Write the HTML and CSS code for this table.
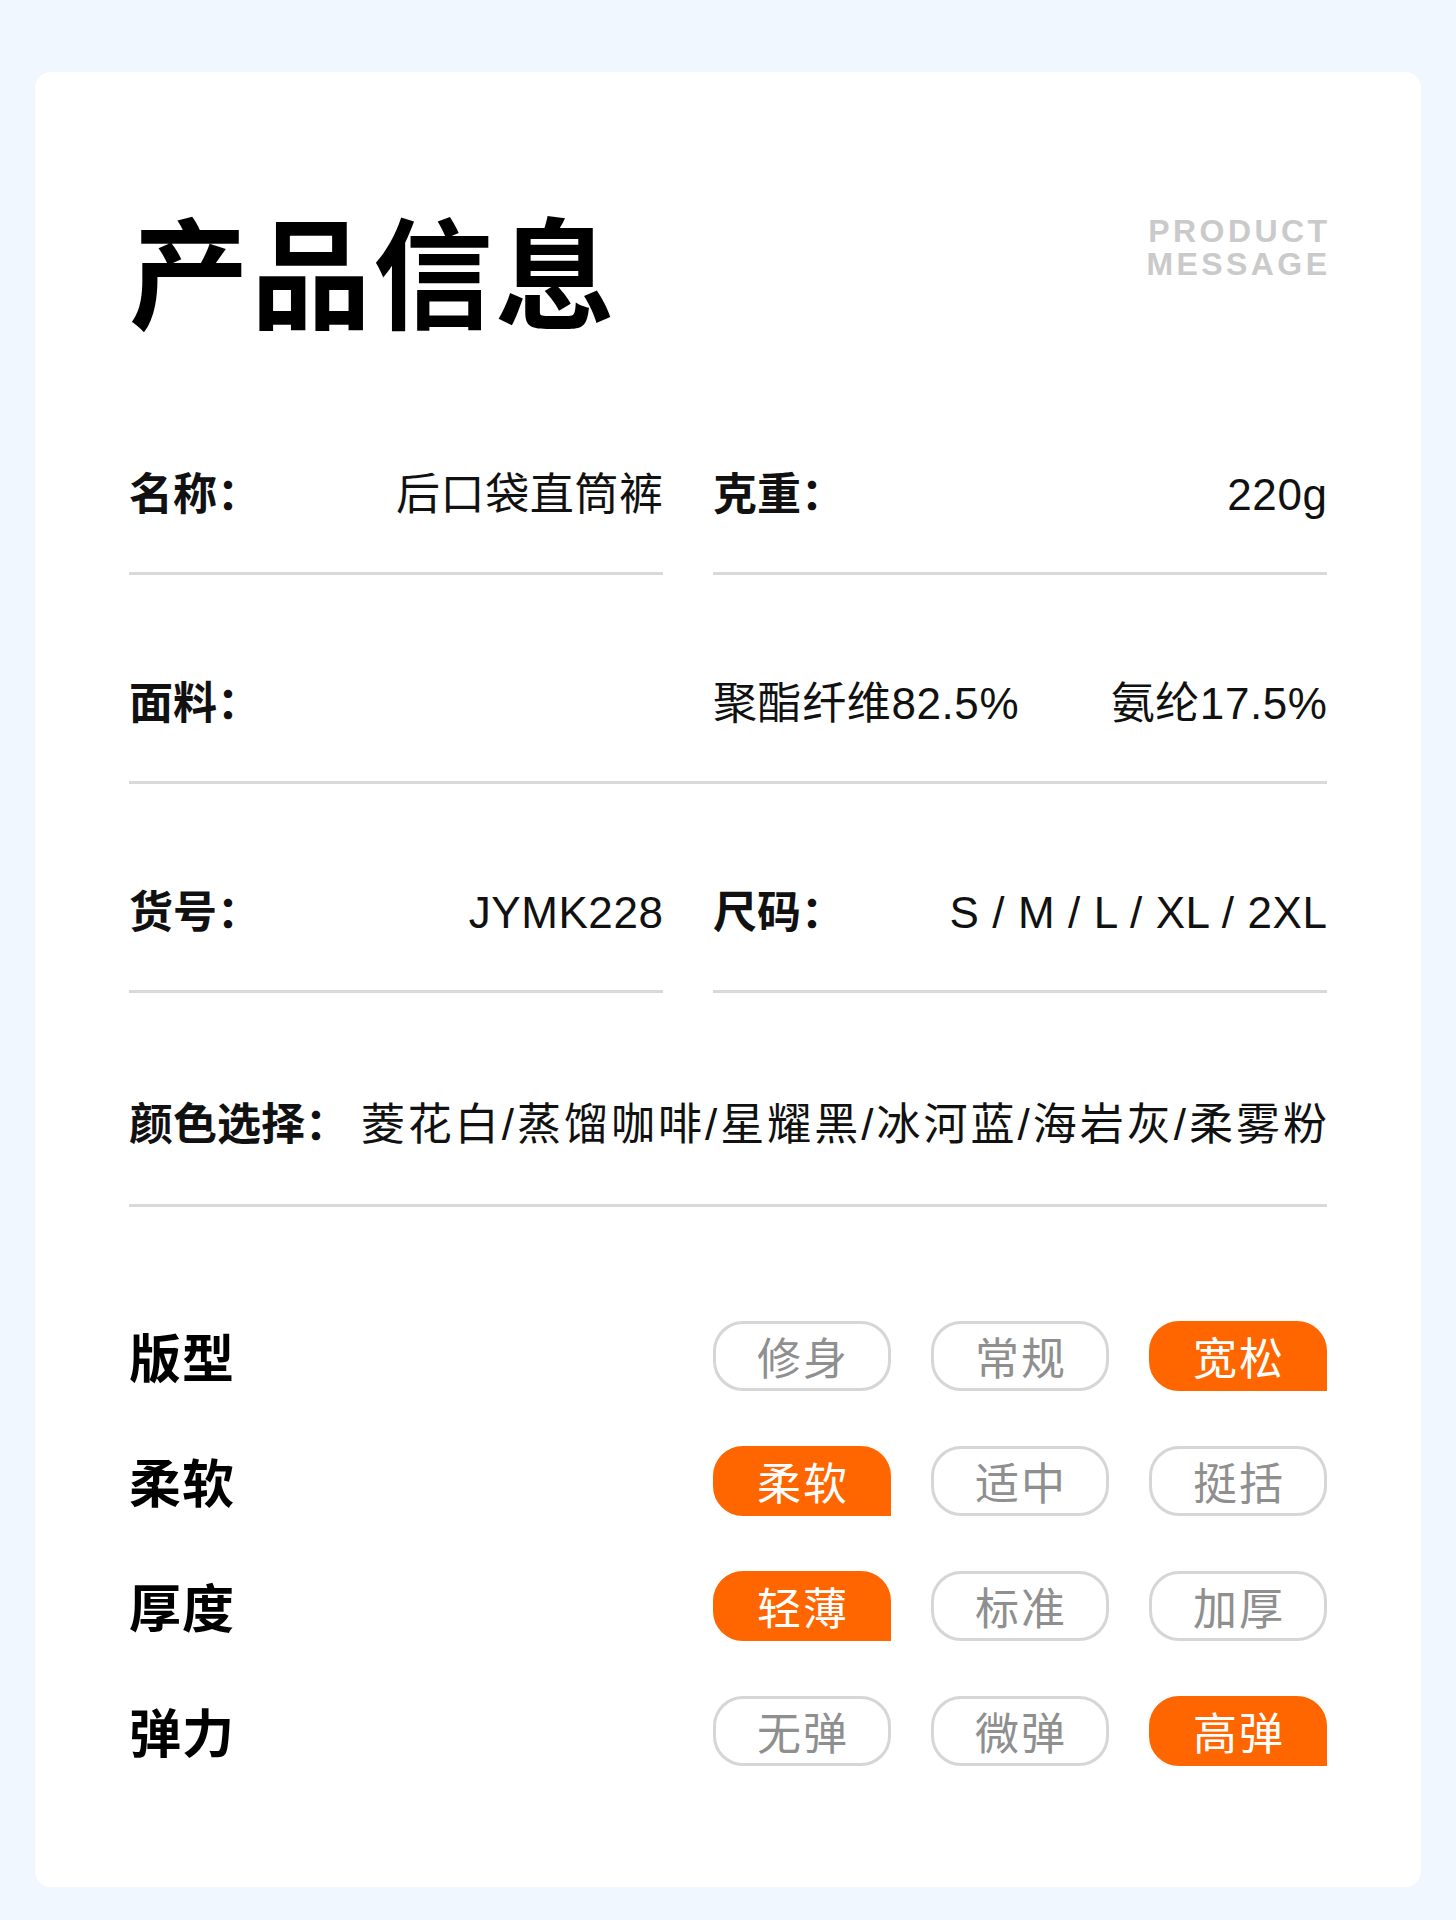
FILE: index.html
```html
<!DOCTYPE html>
<html lang="zh-CN">
<head>
<meta charset="utf-8">
<title>产品信息</title>
<link rel="stylesheet" href="styles.css">
</head>
<body>
<div class="page">
  <div class="card">
    <div class="header">
      <h1 class="title">产品信息</h1>
      <div class="en">
        <span class="en-line">PRODUCT</span>
        <span class="en-line">MESSAGE</span>
      </div>
    </div>

    <div class="info">
      <div class="cell">
        <span class="label">名称：</span>
        <span class="value">后口袋直筒裤</span>
      </div>
      <div class="cell">
        <span class="label">克重：</span>
        <span class="value">220g</span>
      </div>

      <div class="cell full">
        <span class="label">面料：</span>
        <div class="values">
          <span class="value">聚酯纤维82.5%</span>
          <span class="value">氨纶17.5%</span>
        </div>
      </div>

      <div class="cell">
        <span class="label">货号：</span>
        <span class="value">JYMK228</span>
      </div>
      <div class="cell">
        <span class="label">尺码：</span>
        <span class="value">S / M / L / XL / 2XL</span>
      </div>

      <div class="cell wide">
        <span class="label">颜色选择：</span>
        <span class="value colors">菱花白/蒸馏咖啡/星耀黑/冰河蓝/海岩灰/柔雾粉</span>
      </div>
    </div>

    <div class="specs">
      <div class="spec-row">
        <span class="spec-label">版型</span>
        <div class="pills">
          <span class="pill">修身</span>
          <span class="pill">常规</span>
          <span class="pill active">宽松</span>
        </div>
      </div>
      <div class="spec-row">
        <span class="spec-label">柔软</span>
        <div class="pills">
          <span class="pill active">柔软</span>
          <span class="pill">适中</span>
          <span class="pill">挺括</span>
        </div>
      </div>
      <div class="spec-row">
        <span class="spec-label">厚度</span>
        <div class="pills">
          <span class="pill active">轻薄</span>
          <span class="pill">标准</span>
          <span class="pill">加厚</span>
        </div>
      </div>
      <div class="spec-row">
        <span class="spec-label">弹力</span>
        <div class="pills">
          <span class="pill">无弹</span>
          <span class="pill">微弹</span>
          <span class="pill active">高弹</span>
        </div>
      </div>
    </div>
  </div>
</div>
</body>
</html>
```
FILE: styles.css
```css
* {
  box-sizing: border-box;
}

html, body {
  margin: 0;
  padding: 0;
}

body {
  background: #f0f7fe;
  font-family: "Liberation Sans", "Noto Sans CJK SC", sans-serif;
  color: #111;
}

.page {
  padding: 72px 35px 33px;
}

.card {
  background: #ffffff;
  border-radius: 16px;
  padding: 136px 94px 120px;
  min-height: 1815px;
}

.header {
  display: flex;
  justify-content: space-between;
  align-items: flex-start;
}

.title {
  margin: 0;
  font-family: "Noto Sans CJK SC", sans-serif;
  font-size: 120px;
  line-height: 120px;
  font-weight: 700;
  color: #000;
  letter-spacing: 2px;
}

.en {
  margin-top: 7px;
  margin-right: -3.4px;
  display: flex;
  flex-direction: column;
  align-items: flex-end;
  font-family: "Liberation Sans", sans-serif;
  font-weight: 700;
  font-size: 32px;
  letter-spacing: 3.4px;
  color: #cacaca;
}

.en-line {
  display: block;
  height: 33px;
  line-height: 33px;
}

.info {
  margin-top: 38px;
  display: grid;
  grid-template-columns: 534px 614px;
  column-gap: 50px;
}

.cell {
  display: flex;
  justify-content: space-between;
  align-items: center;
  padding: 104px 0 52px;
  border-bottom: 3px solid #d9d9d9;
  font-size: 44px;
  line-height: 50px;
}

.cell.full {
  grid-column: 1 / -1;
  display: grid;
  grid-template-columns: 584px 1fr;
}

.cell.wide {
  grid-column: 1 / -1;
  padding: 107px 0 54px;
}

.label {
  font-weight: 700;
  color: #111;
  white-space: nowrap;
}

.value {
  font-weight: 400;
  color: #111;
  white-space: nowrap;
  letter-spacing: 0.6px;
  margin-right: -0.6px;
}

.values {
  display: flex;
  justify-content: space-between;
}

.value.colors {
  letter-spacing: 3px;
  margin-right: -3px;
}

.specs {
  margin-top: 114px;
  display: flex;
  flex-direction: column;
  gap: 55px;
}

.spec-row {
  display: flex;
  justify-content: space-between;
  align-items: center;
  height: 70px;
}

.spec-label {
  font-family: "Noto Sans CJK SC", sans-serif;
  font-weight: 700;
  font-size: 52px;
  line-height: 70px;
  letter-spacing: 1px;
  color: #000;
}

.pills {
  display: grid;
  grid-template-columns: repeat(3, 178px);
  column-gap: 40px;
}

.pill {
  height: 70px;
  display: flex;
  align-items: center;
  justify-content: center;
  border: 3px solid #d6d6d6;
  border-radius: 30px;
  font-family: "Noto Sans CJK SC", sans-serif;
  font-size: 44px;
  line-height: 1;
  color: #8f8f8f;
  letter-spacing: 2px;
  padding-left: 2px;
}

.pill.active {
  background: #ff6600;
  border-color: #ff6600;
  color: #ffffff;
  border-bottom-right-radius: 0;
}
```
